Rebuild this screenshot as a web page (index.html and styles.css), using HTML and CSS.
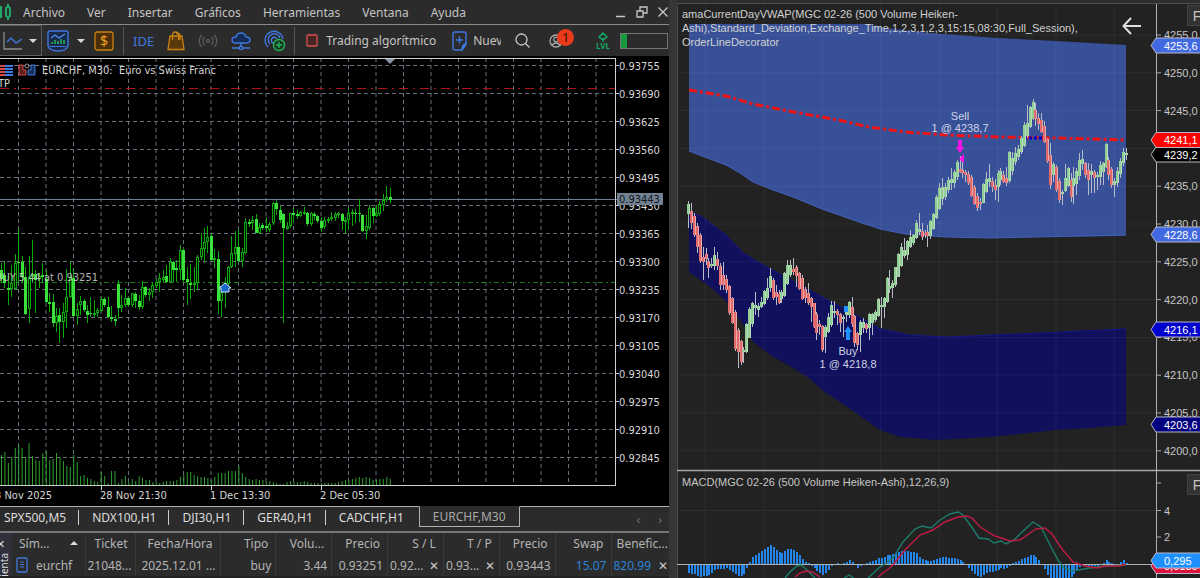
FILE: index.html
```html
<!DOCTYPE html>
<html lang="es">
<head>
  <meta charset="UTF-8">
  <meta name="viewport" content="width=device-width, initial-scale=1.0">
  <title>EURCHF,M30</title>
  <link rel="stylesheet" href="styles.css">
</head>
<body>
  <div class="app">
    <main class="terminal">
      <nav class="menubar">
        <svg class="logo" width="11" height="20" viewBox="0 0 11 20" fill="none" stroke="#1fa866" stroke-width="2"><path d="M1 4v12M6 7q0-2 2-2t2 2v6q0 2-2 2t-2-2zM8 2v3M8 15v3M-2 6h2v8h-2"/></svg>
        <button>Archivo</button>
        <button>Ver</button>
        <button>Insertar</button>
        <button>Gráficos</button>
        <button>Herramientas</button>
        <button>Ventana</button>
        <button>Ayuda</button>
        <div class="window-buttons">
          <button aria-label="Minimizar"><svg width="12" height="12" viewBox="0 0 12 12"><path d="M1 10.500h9" stroke="#c8c8c8" stroke-width="1.500"/></svg></button>
          <button aria-label="Restaurar"><svg width="12" height="12" viewBox="0 0 12 12" fill="none" stroke="#c8c8c8" stroke-width="1.300"><path d="M4 5V1h7v6H7"/><path d="M1 5h6v6H1z"/></svg></button>
          <button aria-label="Cerrar"><svg width="12" height="12" viewBox="0 0 12 12"><path d="M1.500 1.500l9 9M10.500 1.500l-9 9" stroke="#c8c8c8" stroke-width="1.300"/></svg></button>
        </div>
      </nav>

      <div class="toolbar">
        <button class="tool chart-type" aria-label="Tipo de gráfico">
          <svg width="20" height="20" viewBox="0 0 20 20" fill="none"><path d="M1 1v17h18" stroke="#8c8c8c" stroke-width="1.300"/><path d="M4 11l4-4 5 5 6-4" stroke="#3f78e0" stroke-width="1.400"/></svg>
          <span class="caret"></span>
        </button>
        <button class="tool" aria-label="Indicadores">
          <svg width="22" height="22" viewBox="0 0 22 22" fill="none"><path d="M3 1h16q2 0 2 2v13q-2 5-10 5T1 16V3q0-2 2-2z" stroke="#3f78e0" stroke-width="1.400" fill="#182a48"/><path d="M4 8l4-3 4 3 6-4" stroke="#4c8df5" stroke-width="1.300"/><path d="M5 14v-2M8 14v-4M11 14v-3M14 14v-5M17 14v-4" stroke="#22b455" stroke-width="1.500"/><path d="M3 16.500h16" stroke="#3f78e0"/></svg>
          <span class="caret"></span>
        </button>
        <button class="tool dollar" aria-label="Símbolos">
          <svg width="20" height="20" viewBox="0 0 20 20"><rect x="1" y="1" width="18" height="18" rx="2" fill="#4a2f0a" stroke="#c98212" stroke-width="1.300"/><text x="10" y="15" class="icon-dollar">$</text></svg>
        </button>
        <span class="sep"></span>
        <button class="tool ide">IDE</button>
        <button class="tool bag" aria-label="Market">
          <svg width="18" height="20" viewBox="0 0 18 20" fill="none" stroke="#c98212" stroke-width="1.300"><path d="M3 5h12l2 13.500H1z" fill="#5a390a"/><path d="M5.500 9V4q0-3 3-3t3 3v5M9 3q4-2 4 2v4"/></svg>
        </button>
        <button class="tool signal" aria-label="Señales">
          <svg width="20" height="14" viewBox="0 0 20 14" fill="none" stroke="#5c5c5c" stroke-width="1.300"><circle cx="10" cy="7" r="1.500"/><path d="M6.500 3q-3 4 0 8M13.500 3q3 4 0 8M3.500 1q-4.500 6 0 12M16.500 1q4.500 6 0 12"/></svg>
        </button>
        <button class="tool cloud" aria-label="VPS">
          <svg width="20" height="18" viewBox="0 0 20 18" fill="none" stroke="#3f78e0" stroke-width="1.400"><path d="M5 11q-4 0-4-3t4-3q1-4 5-4t5 4q4 0 4 3t-4 3z" fill="#132c58"/><path d="M10 11v3M1 16h7M12 16h7"/><circle cx="10" cy="16" r="1.700"/></svg>
        </button>
        <button class="tool radar" aria-label="Conexión">
          <svg width="22" height="22" viewBox="0 0 22 22" fill="none" stroke="#3f78e0" stroke-width="1.400"><path d="M4 17A9 9 0 1 1 19 9M6 14a6 6 0 1 1 10-6M9 13a3 3 0 1 1 4-4"/><circle cx="15" cy="15" r="5.500" fill="#173a26" stroke="#22b455"/><path d="M15 12v6M12 15h6" stroke="#22b455"/></svg>
        </button>
        <span class="sep"></span>
        <button class="tool algo">
          <svg width="12" height="13" viewBox="0 0 12 13"><rect x="1" y="1" width="10" height="11" rx="1" fill="#4a2323" stroke="#d9534f" stroke-width="1.300"/></svg>
          Trading algorítmico
        </button>
        <button class="tool order">
          <svg width="15" height="20" viewBox="0 0 15 20" fill="none" stroke="#3f78e0" stroke-width="1.400"><path d="M3 1h9q2 0 2 2v10l-4 6H3q-2 0-2-2V3q0-2 2-2z"/><path d="M14 13q-4 0-4 6z" fill="#3f78e0"/><path d="M7.500 5.500v7M4 9h7"/></svg>
          <span class="clip">Nueva orden</span>
        </button>
        <button class="tool search" aria-label="Buscar">
          <svg width="15" height="15" viewBox="0 0 15 15" fill="none" stroke="#c8c8c8" stroke-width="1.300"><circle cx="6.500" cy="6.500" r="5.500"/><path d="M10.500 10.500l4 4"/></svg>
        </button>
        <button class="tool account" aria-label="Cuenta">
          <svg width="14" height="14" viewBox="0 0 14 14" fill="none" stroke="#a8a8a8" stroke-width="1.300"><circle cx="7" cy="7" r="6"/><circle cx="7" cy="5.500" r="2.300"/><path d="M3 11q4-4 8 0"/></svg>
          <span class="badge">1</span>
        </button>
        <button class="tool level" aria-label="Nivel">
          <svg width="16" height="18" viewBox="0 0 16 18"><path d="M8 1l4 4-4 3-4-3zM8 6v4" fill="none" stroke="#16a663" stroke-width="1.500"/><text x="8" y="17" class="icon-lvl">LVL</text></svg>
        </button>
        <span class="meter"><span class="meter-fill"></span></span>
      </div>

      <svg class="chart" id="forexChart" viewBox="0 56 669 450" role="img" aria-label="EURCHF, M30"></svg>

      <div class="tabs">
        <button class="tab">SPX500,M5</button>
        <button class="tab">NDX100,H1</button>
        <button class="tab">DJI30,H1</button>
        <button class="tab">GER40,H1</button>
        <button class="tab">CADCHF,H1</button>
        <button class="tab active">EURCHF,M30</button>
        <span class="arrows"><button aria-label="Anterior">‹</button><button aria-label="Siguiente">›</button></span>
      </div>

      <div class="toolbox">
        <div class="side"><button aria-label="Cerrar panel">✕</button><span class="side-text">Herramienta</span></div>
        <table>
          <colgroup>
            <col class="c-symbol"><col class="c-ticket"><col class="c-time"><col><col><col><col><col><col><col><col class="c-profit">
          </colgroup>
          <thead>
            <tr><th class="left">Sím... <span class="sort"></span></th><th>Ticket</th><th>Fecha/Hora</th><th>Tipo</th><th>Volu...</th><th>Precio</th><th>S / L</th><th>T / P</th><th>Precio</th><th>Swap</th><th class="tight">Benefic...</th></tr>
          </thead>
          <tbody>
            <tr>
              <td class="left"><span class="symbol"><svg width="12" height="16" viewBox="0 0 12 16" fill="none" stroke="#3f78e0" stroke-width="1.300"><rect x="1" y="1" width="10" height="14" rx="1.500"/><path d="M4 5h4M4 7.500h4M4 10h4" stroke-width="1"/></svg>eurchf</span></td>
              <td class="tight">21048...</td><td class="tight">2025.12.01 ...</td><td class="tight">buy</td><td class="tight">3.44</td><td class="tight">0.93251</td>
              <td class="tight"><span class="stop">0.92... <button aria-label="Quitar S/L">✕</button></span></td>
              <td class="tight"><span class="stop">0.93... <button aria-label="Quitar T/P">✕</button></span></td>
              <td class="tight">0.93443</td><td class="tight blue">15.07</td>
              <td class="tight"><span class="stop blue">820.99 <button aria-label="Cerrar posición">✕</button></span></td>
            </tr>
          </tbody>
        </table>
      </div>
    </main>

    <section class="futures">
      <svg class="chart" id="futuresChart" viewBox="677 0 523 578" role="img" aria-label="MGC 02-26"></svg>
      <h2 class="title">amaCurrentDayVWAP(MGC 02-26 (500 Volume Heiken-<br>Ashi),Standard_Deviation,Exchange_Time,1,2,3,1,2,3,15:15,08:30,Full_Session),<br>OrderLineDecorator</h2>
      <button class="back" aria-label="Volver"><svg width="20" height="18" viewBox="0 0 20 18" fill="none" stroke="#dedede" stroke-width="2"><path d="M19 9H2M9 1L1.500 9 9 17"/></svg></button>
      <button class="fbtn">F</button>
      <button class="fbtn lower">F</button>
    </section>
  </div>
  <script src="script.js"></script>
</body>
</html>
```
FILE: styles.css
```css
* {
  box-sizing: border-box;
}
body {
  margin: 0;
  background: #222;
  color: #c4c4c4;
  font-family: "Noto Sans", "Open Sans", sans-serif;
  font-size: 12px;
  overflow: hidden;
}
button {
  font: inherit;
  color: inherit;
  background: none;
  border: 0;
  padding: 0;
  cursor: pointer;
}
.app {
  display: grid;
  grid-template-columns: 669fr 523fr;
  column-gap: 8px;
  background: #363638;
}
.terminal {
  background: #2b2b2b;
  min-width: 0;
}
.chart {
  display: block;
  width: 100%;
}

/* menu */
.menubar {
  display: flex;
  align-items: center;
  gap: 22px;
  height: 25px;
  border-bottom: 1px solid #8a8a8a;
}
.menubar .logo {
  margin-right: -10px;
}
.window-buttons {
  display: flex;
  gap: 9px;
  margin-left: auto;
}
.window-buttons svg,
.tool svg {
  display: block;
}

/* toolbar */
.toolbar {
  display: flex;
  align-items: center;
  height: 31px;
}
.tool {
  display: flex;
  align-items: center;
  gap: 8px;
  white-space: nowrap;
}
.chart-type {
  height: 31px;
  width: 42px;
  padding-left: 3px;
  gap: 6px;
  border: 1px solid #5c5c5c;
  border-left: 0;
  margin-right: 5px;
}
.caret {
  border: 4px solid transparent;
  border-top-color: #d8d8d8;
  border-bottom: 0;
}
.dollar {
  margin-left: 9px;
}
.sep {
  width: 1px;
  height: 28px;
  background: #555;
  margin: 0 9px;
}
.ide {
  color: #3f78e0;
  font-size: 13px;
  margin-right: 13px;
}
.bag,
.signal,
.cloud {
  margin-right: 13px;
}
.radar {
  margin-right: -1px;
}
.algo {
  margin-left: 2px;
}
.order {
  margin-left: 16px;
  gap: 6px;
}
.clip {
  width: 28px;
  overflow: hidden;
}
.search {
  margin-left: 14px;
}
.account {
  position: relative;
  margin-left: 19px;
}
.badge {
  position: absolute;
  left: 8px;
  top: -5px;
  width: 17px;
  height: 17px;
  border-radius: 50%;
  background: #ea3a1c;
  color: #3a0d05;
  font-size: 13px;
  line-height: 17px;
  text-align: center;
}
.level {
  margin-left: auto;
}
.meter {
  width: 48px;
  height: 16px;
  border: 1px solid #777;
  margin: 0 1px 0 9px;
}
.meter-fill {
  display: block;
  width: 6px;
  height: 100%;
  background: #169a3c;
}
.icon-dollar {
  font-size: 14px;
  fill: #f0a020;
  text-anchor: middle;
}
.icon-lvl {
  font-size: 8px;
  font-weight: bold;
  fill: #16a663;
  text-anchor: middle;
}

/* chart texts */
.mt-text {
  font: 11px "DejaVu Sans Condensed", "DejaVu Sans", sans-serif;
  fill: #d6d6d6;
}
.nt-text {
  font: 11px "Liberation Sans", Arial, sans-serif;
  fill: #c6c6c6;
}
.nt-text.mark {
  fill: #cdd3e6;
  text-anchor: middle;
}
.nt-text.tag {
  fill: #fff;
}

/* chart tabs */
.tabs {
  display: flex;
  height: 27px;
  border-top: 1px solid #b0b0b0;
  border-bottom: 2px solid #777;
  color: #dcdcdc;
}
.tab {
  position: relative;
  height: 20px;
  padding: 0 13px;
}
.tab:first-child {
  padding-left: 4px;
}
.tab:not(.active)::after {
  content: "";
  position: absolute;
  right: 0;
  top: 3px;
  height: 15px;
  border-right: 1px solid #ccc;
}
.tab:nth-child(5)::after {
  display: none;
}
.tab.active {
  border: 1px solid #b0b0b0;
  border-top-color: #2b2b2b;
  margin-top: -1px;
  margin-left: 2px;
  height: 21px;
  color: #a8a8a8;
}
.arrows {
  display: flex;
  gap: 18px;
  margin-left: auto;
  padding-right: 7px;
  color: #777;
}

/* positions table */
.toolbox {
  display: flex;
  height: 45px;
  overflow: hidden;
  border-bottom: 2px solid #222;
}
.side {
  width: 12px;
  flex: none;
  background: #30303c;
  font-size: 11px;
  color: #ddd;
}
.side button {
  display: block;
  height: 20px;
  margin-left: -4px;
}
.side-text {
  display: block;
  writing-mode: vertical-rl;
  transform: rotate(180deg);
  font-size: 10px;
  line-height: 8px;
}
table {
  table-layout: fixed;
  width: 100%;
  border-collapse: collapse;
  color: #b4b4b4;
}
th,
td {
  height: 21px;
  padding: 0 7px 0 2px;
  text-align: right;
  font-weight: normal;
  white-space: nowrap;
  overflow: hidden;
  border-right: 1px solid #383838;
}
th:last-child,
td:last-child {
  border-right: 0;
}
.left {
  text-align: left;
  padding-left: 7px;
}
.tight {
  padding-right: 4px;
}
.c-symbol {
  width: 73px;
}
.c-ticket {
  width: 50px;
}
.c-time {
  width: 85px;
}
.c-profit {
  width: 58px;
}
.sort {
  float: right;
  margin-top: 6px;
  border: 4px solid transparent;
  border-bottom-color: #ddd;
  border-top: 0;
}
.symbol {
  display: flex;
  align-items: center;
  gap: 8px;
  margin-left: -3px;
}
.stop {
  display: flex;
  justify-content: space-between;
}
.stop button {
  color: #ccc;
}
th.tight,
td.tight:last-child {
  padding-right: 1px;
}
.blue {
  color: #2b84d8;
}

/* right panel */
.futures {
  position: relative;
  overflow: hidden;
  background: #222;
  min-width: 0;
}
.title {
  position: absolute;
  left: 5px;
  top: 7px;
  margin: 0;
  font: 11px/14px "Liberation Sans", Arial, sans-serif;
  color: #d0d0d0;
}
.back {
  position: absolute;
  right: 58px;
  top: 17px;
}
.fbtn {
  position: absolute;
  right: -7px;
  top: 5px;
  width: 20px;
  height: 21px;
  background: #333;
  border: 1px solid #444;
  font-family: "Liberation Sans", Arial, sans-serif;
  font-size: 14px;
}
.fbtn.lower {
  top: 474px;
}
```
FILE: script.js
```js
// candles: [high, body top, body bottom, low, type], y in chart units
// type 1 = solid, 0 = hollow
const forex = [
  [263,270,279,283,1],[261,275,283,288,1],[273,288,290,305,1],[265,283,289,297,0],[254,263,289,290,0],
  [228,262,263,283,1],[256,262,277,283,1],[267,277,314,315,1],[256,277,309,323,0],[240,274,277,283,0],
  [270,274,280,313,1],[273,276,279,288,0],[263,275,277,283,1],[270,279,302,303,1],[293,302,304,312,1],
  [294,302,323,327,1],[308,316,323,332,0],[308,315,322,343,1],[303,312,322,338,0],[269,297,312,328,0],
  [261,277,297,298,0],[268,278,316,317,1],[303,309,316,325,0],[296,301,305,315,0],[299,301,310,312,1],
  [305,311,315,323,1],[297,313,314,317,1],[300,313,314,317,0],[308,310,313,317,0],[297,299,311,312,0],
  [297,299,305,307,1],[297,307,317,318,1],[306,317,319,322,1],[315,319,321,326,1],[280,284,308,319,1],
  [295,305,308,312,0],[288,298,305,307,0],[297,298,305,307,1],[293,293,305,307,0],[292,294,301,308,1],
  [295,301,307,310,1],[281,287,307,309,0],[286,287,295,297,1],[288,292,295,301,0],[282,285,292,298,0],
  [279,282,286,288,0],[273,278,282,292,0],[270,277,280,283,0],[265,276,282,283,1],[258,262,282,283,0],
  [261,262,270,282,1],[260,268,270,282,1],[245,250,270,280,0],[248,250,280,282,1],[267,279,282,305,1],
  [264,283,285,299,1],[267,283,285,292,0],[255,257,283,290,0],[233,248,257,260,0],[228,242,249,263,0],
  [226,237,242,253,0],[233,236,260,261,1],[249,258,260,268,0],[251,259,301,314,1],[290,292,301,317,0],
  [277,283,292,308,0],[266,267,284,290,0],[236,253,267,268,0],[231,247,254,267,0],[229,247,261,262,1],
  [248,252,261,267,0],[218,222,253,254,0],[219,222,224,227,1],[216,220,223,230,0],[214,219,233,233,1],
  [223,227,233,234,0],[223,225,228,230,1],[217,226,228,232,1],[222,224,230,232,0],[202,203,223,225,0],
  [200,203,209,215,1],[206,210,220,223,1],[213,214,228,323,1],[222,226,229,230,0],[213,213,226,228,0],
  [208,213,215,222,1],[210,214,216,219,1],[211,212,216,217,0],[207,212,213,215,0],[212,213,224,226,1],
  [212,213,224,226,0],[212,214,216,220,1],[215,216,221,223,1],[217,221,228,232,1],[217,220,227,229,0],
  [217,219,220,223,0],[212,217,219,221,0],[212,214,218,221,0],[212,213,215,218,0],[213,214,221,230,1],
  [217,220,222,234,0],[208,213,220,230,0],[209,212,214,226,0],[209,213,214,223,1],[199,213,214,222,1],
  [214,215,231,232,1],[215,226,231,239,0],[205,208,228,230,0],[207,208,216,223,1],[205,213,216,217,0],
  [201,204,214,216,0],[194,200,205,211,0],[186,197,200,202,0],[188,197,200,203,1]
];

const volume = [
  30,33,22,28,37,40,37,28,42,29,25,24,32,34,25,26,32,28,24,19,18,30,23,9,10,7,6,4,3,13,9,2,14,14,2,6,9,3,6,
  4,9,7,5,5,3,3,2,3,4,4,4,5,8,10,13,13,10,9,8,8,7,5,8,12,12,12,14,14,14,19,12,8,6,5,6,5,5,3,4,3,2,1,1,3,4,
  3,3,3,4,3,2,2,2,2,2,2,2,2,3,4,5,5,6,7,8,7,8,7,5,5,6,6,8,6
];

// type 1 = up, 0 = down
const gold = [
  [201,204,214,228,1],[203,211,223,229,0],[213,216,235,237,0],[223,226,247,253,0],[233,235,261,263,0],
  [247,257,262,280,0],[248,254,259,265,0],[258,261,268,278,0],[258,264,266,268,1],[247,255,266,270,1],
  [252,259,266,270,0],[263,266,285,290,0],[262,275,285,290,0],[275,279,290,293,0],[285,286,313,315,0],
  [297,298,323,324,0],[310,312,349,351,0],[328,330,352,368,0],[340,341,362,365,0],[347,350,352,363,1],
  [323,324,352,353,1],[307,309,338,338,1],[302,303,324,327,1],[292,305,308,315,1],[303,306,310,317,1],
  [297,302,307,308,1],[290,291,304,305,1],[278,288,298,300,1],[268,276,288,292,1],[278,280,298,300,0],
  [285,292,297,305,0],[290,294,303,304,0],[290,292,299,303,1],[272,273,296,297,1],[260,265,284,285,1],
  [260,265,275,277,1],[258,269,272,275,0],[265,267,276,287,0],[272,273,289,290,0],[275,278,299,300,0],
  [287,289,298,303,0],[283,293,303,305,0],[297,298,307,322,0],[303,303,327,328,0],[312,314,333,340,0],
  [320,324,327,335,0],[325,326,350,352,0],[325,327,337,353,1],[313,317,332,333,1],[301,305,325,327,1],
  [301,311,313,318,1],[309,311,315,325,0],[313,314,323,332,0],[315,317,318,337,1],[308,309,315,322,1],
  [301,302,315,318,1],[297,307,324,327,0],[315,316,343,347,0],[332,333,345,350,0],[320,322,335,352,1],
  [318,322,328,333,1],[323,324,329,333,0],[313,314,328,340,1],[313,314,323,335,1],[310,312,320,322,1],
  [298,299,316,317,1],[297,305,307,328,1],[297,298,307,318,1],[277,278,302,303,1],[270,286,289,293,1],
  [280,283,288,298,1],[267,267,285,287,1],[253,254,277,277,1],[243,247,266,267,1],[238,250,256,258,1],
  [240,241,255,260,1],[230,237,247,248,1],[234,235,243,245,1],[220,223,238,239,1],[213,229,232,235,1],
  [223,231,237,240,0],[230,233,235,238,0],[225,232,236,247,0],[220,221,236,239,1],[213,214,229,230,1],
  [195,197,218,219,1],[183,188,209,210,1],[178,187,199,205,1],[183,187,197,200,1],[177,180,190,193,1],
  [168,179,183,190,1],[170,172,183,188,1],[160,162,177,180,1],[156,169,172,173,0],[158,170,173,178,0],
  [170,172,175,182,0],[171,174,183,185,0],[175,177,196,197,0],[185,187,204,205,0],[193,196,208,211,0],
  [198,202,204,210,0],[183,184,203,203,1],[172,179,192,193,1],[164,178,182,187,1],[177,181,187,192,0],
  [179,185,190,200,0],[170,173,187,202,1],[168,171,180,185,1],[171,175,182,183,0],[167,178,183,186,0],
  [151,152,181,183,1],[152,158,171,175,1],[147,153,162,165,1],[145,149,157,160,1],[136,138,152,154,1],
  [122,125,146,147,1],[105,123,136,138,1],[106,107,127,128,1],[99,102,119,120,1],[103,110,119,126,0],
  [113,118,124,130,0],[113,120,132,133,0],[121,126,142,143,0],[138,139,161,163,0],[143,155,185,189,0],
  [162,164,175,182,1],[165,167,190,192,0],[178,181,200,203,0],[190,192,194,205,1],[164,178,191,192,1],
  [167,168,186,187,1],[173,180,197,202,0],[167,178,186,204,1],[168,171,184,195,1],[153,160,176,180,1],
  [150,159,164,170,1],[162,163,175,178,0],[163,170,180,195,0],[164,171,175,193,1],[170,172,178,193,0],
  [172,175,177,190,1],[161,165,177,185,1],[162,163,172,185,1],[143,144,167,168,1],[157,160,175,180,0],
  [167,169,185,188,0],[178,181,185,197,1],[167,171,183,187,1],[158,161,174,178,1],[148,152,163,166,1],
  [148,153,155,160,1]
];

const histogram = [
  -8,-9,-9,-11,-12,-11,-11,-10,-8,-5,-4,-4,-4,-3,-5,-7,-9,-11,-11,-9,-3,
  2,7,9,11,13,15,17,19,17,14,12,11,13,15,15,14,12,9,5,2,
  1,-1,-3,-6,-8,-10,-8,-5,-1,0,1,0,1,2,4,2,0,-3,-1,0,1,
  2,3,4,6,6,7,9,9,10,11,12,13,13,13,12,12,11,7,5,4,3,3,
  4,5,6,7,7,6,6,6,5,4,2,0,-3,-6,-9,-11,-12,-10,-8,-7,-7,-6,-5,-3,-4,-3,
  -1,1,2,3,5,6,7,9,9,7,4,0,-4,-10,-14,-16,-16,-16,-16,-15,-13,-12,-9,-6,
  -2,-1,-1,-2,-1,-1,-1,0,1,4,2,1,-1,-1,2,4,1
];

function rect(x, y, w, h, attrs) {
  return `<rect x="${x}" y="${y}" width="${w}" height="${h}" ${attrs}/>`;
}
function line(x1, y1, x2, y2, attrs) {
  return `<path d="M${x1} ${y1}L${x2} ${y2}" fill="none" ${attrs}/>`;
}
function poly(points, attrs) {
  return `<polyline points="${points}" fill="none" ${attrs}/>`;
}
function text(x, y, str, cls, attrs = "") {
  return `<text x="${x}" y="${y}" class="${cls}" ${attrs}>${str}</text>`;
}

function drawForex() {
  const grid = 'stroke="#66707c" stroke-dasharray="4 3"';
  let s = rect(0, 56, 669, 450, 'fill="#000"');
  for (let i = 0; i < 22; i++) s += line(18.5 + i * 27.5, 58, 18.5 + i * 27.5, 485, grid);
  for (let i = 0; i < 15; i++) {
    const y = 65.5 + i * 28;
    s += line(0, y, 615, y, grid);
    s += line(615, y, 619, y, 'stroke="#ccc"');
    s += text(619, y + 4, (0.93755 - i * 0.00065).toFixed(5), "mt-text");
  }
  s += line(0, 88.5, 615, 88.5, 'stroke="#b01018" stroke-dasharray="9 5 2 5"');
  s += line(0, 282.5, 615, 282.5, 'stroke="#1f7a1f" stroke-dasharray="5 3 2 3"');
  s += line(0, 199.5, 617, 199.5, 'stroke="#708090"');

  volume.forEach((v, i) => {
    s += rect((1 + i * 3.44).toFixed(1), 485 - v, 1, v, 'fill="#2fa02f"');
  });
  forex.forEach((c, i) => {
    const x = Math.round(1 + i * 3.44);
    s += rect(x, c[0], 1, c[3] - c[0], 'fill="#0ca80c"');
    if (c[4]) s += rect(x - 1, c[1], 3, Math.max(c[2] - c[1], 1), 'fill="#3ce03c"');
    else s += rect(x - 0.5, c[1] + 0.5, 2, Math.max(c[2] - c[1] - 1, 1), 'fill="#031803" stroke="#0fa80f"');
  });
  s += text(98, 281, "BUY 5.44 at 0.93251", "mt-text", 'text-anchor="end" fill-opacity=".85"');

  // frame and axes
  s += line(0, 58.5, 615.5, 58.5, 'stroke="#d0d0d0"');
  s += line(615.5, 58, 615.5, 486, 'stroke="#d0d0d0"');
  s += line(0, 485.5, 616, 485.5, 'stroke="#d0d0d0"');
  s += '<path d="M385 59h10l-5 5z" fill="#8796a6"/>';
  s += '<path d="M225 283l6 5h-2v4h-8v-4h-2z" fill="#1768c8" stroke="#cfe2ff"/>';
  s += rect(617, 193, 46, 12, 'fill="#708090"') + text(619, 203, "0.93443", "mt-text", 'style="fill:#10161c"');
  [[-5, "3 Nov 2025"], [100, "28 Nov 21:30"], [210, "1 Dec 13:30"], [320, "2 Dec 05:30"]].forEach(t => {
    s += text(t[0], 499, t[1], "mt-text");
    s += line(t[0] + 1.5, 485, t[0] + 1.5, 490, 'stroke="#d0d0d0"');
  });

  // symbol header
  s += '<path d="M0 66h5M0 69h5M0 72h5M0 75h5" stroke="#d04848" stroke-width="2"/>';
  s += '<path d="M5 66h8M5 69h8M5 72h8M5 75h8" stroke="#3f78e0" stroke-width="2"/>';
  s += '<path d="M19 65v10h7v-5h-3v-5z" fill="#5a2020" stroke="#d04848"/>';
  s += '<path d="M35 65v10h-7v-5h3v-5z" fill="#18305a" stroke="#3f78e0"/><circle cx="27" cy="66" r="2" fill="none" stroke="#999"/>';
  s += text(42, 74, "EURCHF, M30:&#160; Euro vs Swiss Franc", "mt-text");
  s += text(-2, 87, "TP", "mt-text");
  document.getElementById("forexChart").innerHTML = s;
}

function tag(y, str, fill) {
  return `<path d="M1151 ${y}l5 -7.5h46v15h-46z" fill="${fill}" stroke="#b8b8c8"/>` + text(1164, y + 4, str, "nt-text tag");
}

function drawFutures() {
  const grid = 'stroke="#303030"';
  let s = rect(677, 0, 523, 578, 'fill="#222"');
  s += rect(677, 0, 523, 3, 'fill="#2e2e30"') + line(677, 3.5, 1200, 3.5, 'stroke="#505054"');
  s += line(677.5, 3, 677.5, 578, 'stroke="#48484c"');

  // deviation bands
  s += '<path d="M689 24H869L886 28 930 33 997 38 1056 41 1126 45V235L1120 236 1035 237 990 238 946 237 905 234 880 229 859 222 822 209 793 197 773 190 753 182 740 173 726 165 689 151z" fill="#385098"/>';
  s += '<path d="M689 211L702 217 726 235 743 253 763 265 793 281 822 297 859 317 880 329 909 335 946 337 997 335 1040 333 1056 332 1126 329V425L1090 428 1056 430 1020 434 990 437 937 440 900 437 880 430 840 402 822 390 809 378 793 368 772 356 753 342 743 324 726 301 709 286 689 272z" fill="#10105c"/>';
  s += poly("689,151 726,165 740,173 753,182 773,190 793,197 822,209 859,222 880,229 905,234 946,237 990,238 1035,237 1126,235", 'stroke="#4160b8"');
  s += poly("689,211 702,217 726,235 743,253 763,265 793,281 822,297 859,317 880,329 909,335 946,337 997,335 1040,333 1126,329", 'stroke="#12128c"');

  for (let i = 0; i < 8; i++) s += line(705.5 + i * 58.4, 4, 705.5 + i * 58.4, 578, 'stroke="#fff" stroke-opacity=".05"');
  for (let i = 0; i < 12; i++) {
    const y = 35 + i * 37.8;
    s += line(680, y, 1156, y, 'stroke="#fff" stroke-opacity=".05"');
    s += line(1156, y, 1161, y, 'stroke="#aaa"');
    s += text(1164, y + 4, 4255 - i * 5 + ",0", "nt-text");
  }

  s += poly("689,90 726,96 753,104 799,113 822,117 843,121 869,127 905,132 946,135 1000,137 1056,138 1126,140", 'stroke="#f01414" stroke-width="3" stroke-dasharray="8 3 3 3"');
  s += line(1024, 138, 1042, 138, 'stroke="#0000d0" stroke-width="3" stroke-dasharray="3 2"');

  gold.forEach((c, i) => {
    const x = Math.round(688 + i * 2.92);
    s += rect(x, c[0], 1, c[3] - c[0], 'fill="#b8bcc8"');
    s += rect(x - 1, c[1], 3, Math.max(c[2] - c[1], 2), c[4] ? 'fill="#90cf94"' : 'fill="#e36a6a"');
    s += rect(x + 1, c[1], 1, Math.max(c[2] - c[1], 2), 'fill="#e8e8e8" fill-opacity=".5"');
  });

  // executions
  s += '<path d="M958 140h4v7h2l-4 6-4-6h2zM964 154v9l-5-4z" fill="#ff10e8"/>';
  s += '<path d="M848 326l4 6h-2v8h-4v-8h-2zM844 306h4v6h-4z" fill="#1e90ff"/>';
  s += text(960, 120, "Sell", "nt-text mark") + text(960, 132, "1 @ 4238,7", "nt-text mark");
  s += text(848, 355, "Buy", "nt-text mark") + text(848, 368, "1 @ 4218,8", "nt-text mark");

  // MACD panel
  s += line(677, 470.5, 1200, 470.5, 'stroke="#a8a8a8" stroke-width="1.5"');
  s += line(680, 510.5, 1156, 510.5, grid);
  s += text(682, 486, "MACD(MGC 02-26 (500 Volume Heiken-Ashi),12,26,9)", "nt-text");
  histogram.forEach((h, i) => {
    s += rect(Math.round(688 + i * 2.92), h > 0 ? 564 - h : 565, 2, Math.abs(h), 'fill="#2485ea"');
  });
  s += line(677, 564.5, 1156, 564.5, 'stroke="#b0b0b0"');
  const teal = 'stroke="#1c7d6c" stroke-width="1.4"';
  const crimson = 'stroke="#c01c46" stroke-width="1.4"';
  s += poly("785,578 790,572 797,566 801,565 806,569 815,578", teal);
  s += poly("844,578 849,575 854,578", teal);
  s += poly("868,578 880,567 893,558 903,542 915,529 922,526 931,528 940,520 950,514 958,512 963,515 971,526 979,538 988,539 994,543 1001,541 1006,544 1014,540 1022,532 1033,522 1041,527 1050,545 1058,560 1064,568 1072,571 1090,568 1105,566 1126,565", teal);
  s += poly("795,577 800,573 806,571 812,572 820,577", crimson);
  s += poly("878,577 892,566 905,550 920,535 933,530 945,522 958,517 967,516 972,518 980,527 995,536 1010,541 1020,540 1030,533 1036,529 1045,528 1052,534 1062,549 1073,562 1085,566 1097,568 1105,566 1120,566 1126,564", crimson);

  // price axis
  s += line(1156.5, 4, 1156.5, 578, 'stroke="#b0b0b0"');
  [[483, ""], [510.5, "4"], [537, "2"]].forEach(t => {
    s += line(1156, t[0], 1161, t[0], 'stroke="#aaa"') + text(1164, t[0] + 4, t[1], "nt-text");
  });
  s += tag(45.5, "4253,6", "#4169e1") + tag(154.5, "4239,2", "#000") + tag(140, "4241,1", "#f00");
  s += tag(234.5, "4228,6", "#4169e1") + tag(329.5, "4216,1", "#0000cd") + tag(424.5, "4203,6", "#000080");
  s += tag(566, "0,0180", "#dc143c") + tag(560.5, "0,295", "#1e90ff");
  document.getElementById("futuresChart").innerHTML = s;
}

drawForex();
drawFutures();
```
